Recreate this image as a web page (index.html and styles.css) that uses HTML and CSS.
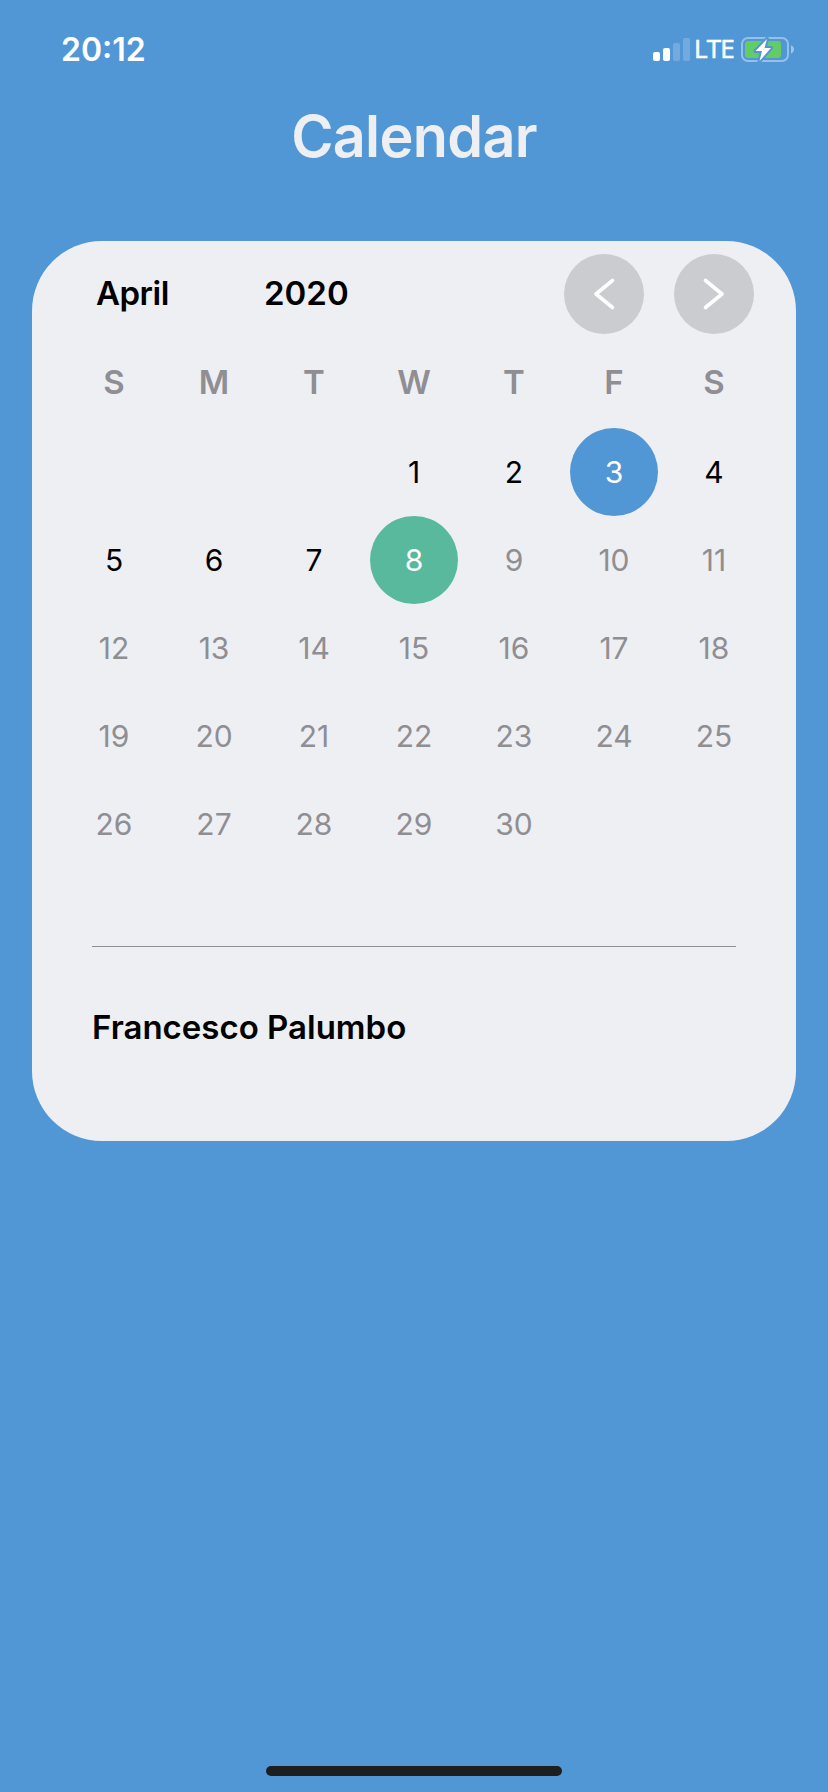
FILE: index.html
```html
<!DOCTYPE html>
<html lang="en">
<head>
<meta charset="utf-8">
<title>Calendar</title>
<link rel="stylesheet" href="styles.css">
</head>
<body>
<div class="screen">
  <header class="status">
    <span class="time">20:12</span>
    <div class="indicators">
      <svg class="signal" width="37" height="23" viewBox="0 0 37 23" fill="#fff">
        <rect x="0" y="14" width="7" height="9" rx="2"/>
        <rect x="10" y="10" width="7" height="13" rx="2"/>
        <rect x="20" y="5" width="7" height="18" rx="2" opacity=".2"/>
        <rect x="30" y="0" width="7" height="23" rx="2" opacity=".2"/>
      </svg>
      <span class="network">LTE</span>
      <svg class="battery" width="54" height="28" viewBox="0 0 54 28">
        <rect x="1" y="2" width="46" height="23" rx="6" fill="none" stroke="#fff" stroke-opacity=".4" stroke-width="2"/>
        <path d="M50 9.300c4 1.700 4 6.700 0 8.400z" fill="#fff" fill-opacity=".45"/>
        <rect x="4" y="5" width="36" height="17" rx="3" fill="#64cc66"/>
        <path d="M26 3 14.500 15h6.500L18.500 25 30 12h-6.500z" fill="#5197d6" stroke="#5197d6" stroke-width="4" stroke-linejoin="round"/>
        <path d="M26 3 14.500 15h6.500L18.500 25 30 12h-6.500z" fill="#fff"/>
      </svg>
    </div>
  </header>
  <h1 class="title">Calendar</h1>
  <main class="card">
    <div class="toolbar">
      <span class="month">April</span>
      <span class="year">2020</span>
      <div class="nav">
        <button class="nav-btn" aria-label="Previous month"><svg width="24" height="34" viewBox="0 0 24 34"><path d="M20.500 3.500 4 17l16.500 13.500"/></svg></button>
        <button class="nav-btn" aria-label="Next month"><svg width="24" height="34" viewBox="0 0 24 34"><path d="M3.500 3.500 20 17 3.500 30.500"/></svg></button>
      </div>
    </div>
    <div class="weekdays">
      <span>S</span><span>M</span><span>T</span><span>W</span><span>T</span><span>F</span><span>S</span>
    </div>
    <div class="days">
      <span class="day first">1</span><span class="day">2</span><span class="day marked">3</span><span class="day">4</span>
      <span class="day">5</span><span class="day">6</span><span class="day">7</span><span class="day today">8</span><span class="day future">9</span><span class="day future">10</span><span class="day future">11</span>
      <span class="day future">12</span><span class="day future">13</span><span class="day future">14</span><span class="day future">15</span><span class="day future">16</span><span class="day future">17</span><span class="day future">18</span>
      <span class="day future">19</span><span class="day future">20</span><span class="day future">21</span><span class="day future">22</span><span class="day future">23</span><span class="day future">24</span><span class="day future">25</span>
      <span class="day future">26</span><span class="day future">27</span><span class="day future">28</span><span class="day future">29</span><span class="day future">30</span>
    </div>
    <p class="event">Francesco Palumbo</p>
  </main>
  <div class="home-indicator"></div>
</div>
</body>
</html>
```
FILE: styles.css
```css
* { box-sizing: border-box; }

body {
  margin: 0;
  background: #5197d6;
  font-family: Inter, "Liberation Sans", sans-serif;
}

.screen {
  display: flex;
  flex-direction: column;
  width: 828px;
  height: 1792px;
}

.status {
  display: flex;
  justify-content: space-between;
  height: 100px;
  padding: 0 33px 0 61px;
  color: #fff;
}

.time {
  font-size: 32px;
  font-weight: 600;
  line-height: 100px;
}

.indicators {
  display: flex;
  align-items: center;
}

.signal { margin: 0 4px 1px 0; }

.network {
  width: 47px;
  padding-bottom: 3px;
  font-family: "Open Sans", "Noto Sans", sans-serif;
  font-size: 26px;
  font-weight: 500;
  line-height: 97px;
  letter-spacing: -0.8px;
  -webkit-text-stroke: 0.6px #fff;
}

.title {
  margin: 0;
  height: 141px;
  padding-top: 6px;
  color: #eeeff3;
  font-size: 57.5px;
  font-weight: 600;
  line-height: 60px;
  letter-spacing: -0.7px;
  text-align: center;
}

.card {
  width: 764px;
  height: 900px;
  margin: 0 32px;
  border-radius: 70px;
  background: #eeeff3;
  color: #000;
}

.toolbar {
  display: flex;
  align-items: center;
  height: 106px;
  padding: 0 42px 0 64px;
  font-size: 33px;
  font-weight: 600;
}

.month {
  width: 168px;
  letter-spacing: -0.5px;
}

.month,
.year {
  padding-bottom: 2px;
}

.nav {
  display: flex;
  gap: 30px;
  margin-left: auto;
}

.nav-btn {
  display: flex;
  align-items: center;
  justify-content: center;
  width: 80px;
  height: 80px;
  padding: 0;
  border: 0;
  border-radius: 50%;
  background: #cbccd0;
}

.nav-btn svg {
  fill: none;
  stroke: #fff;
  stroke-width: 3.6;
  stroke-linecap: round;
  stroke-linejoin: round;
}

.weekdays,
.days {
  display: grid;
  grid-template-columns: repeat(7, 100px);
  justify-items: center;
  padding: 0 32px;
}

.weekdays {
  height: 81px;
  color: #8e8e93;
  font-size: 33px;
  font-weight: 600;
  line-height: 70px;
}

.days { grid-auto-rows: 88px; }

.day {
  width: 88px;
  border-radius: 50%;
  font-size: 30px;
  line-height: 88px;
  text-align: center;
}

.first { grid-column-start: 4; }
.future { color: #8e8e93; }
.marked { background: #5197d6; color: #fff; }
.today { background: #58b99d; color: #fff; }

.event {
  margin: 78px 60px 0;
  padding-top: 60px;
  border-top: 1px solid #8e8e93;
  font-size: 33px;
  font-weight: 600;
  line-height: 40px;
}

.home-indicator {
  width: 296px;
  height: 10px;
  margin: auto auto 16px;
  border-radius: 5px;
  background: #1e1e1e;
}
```
